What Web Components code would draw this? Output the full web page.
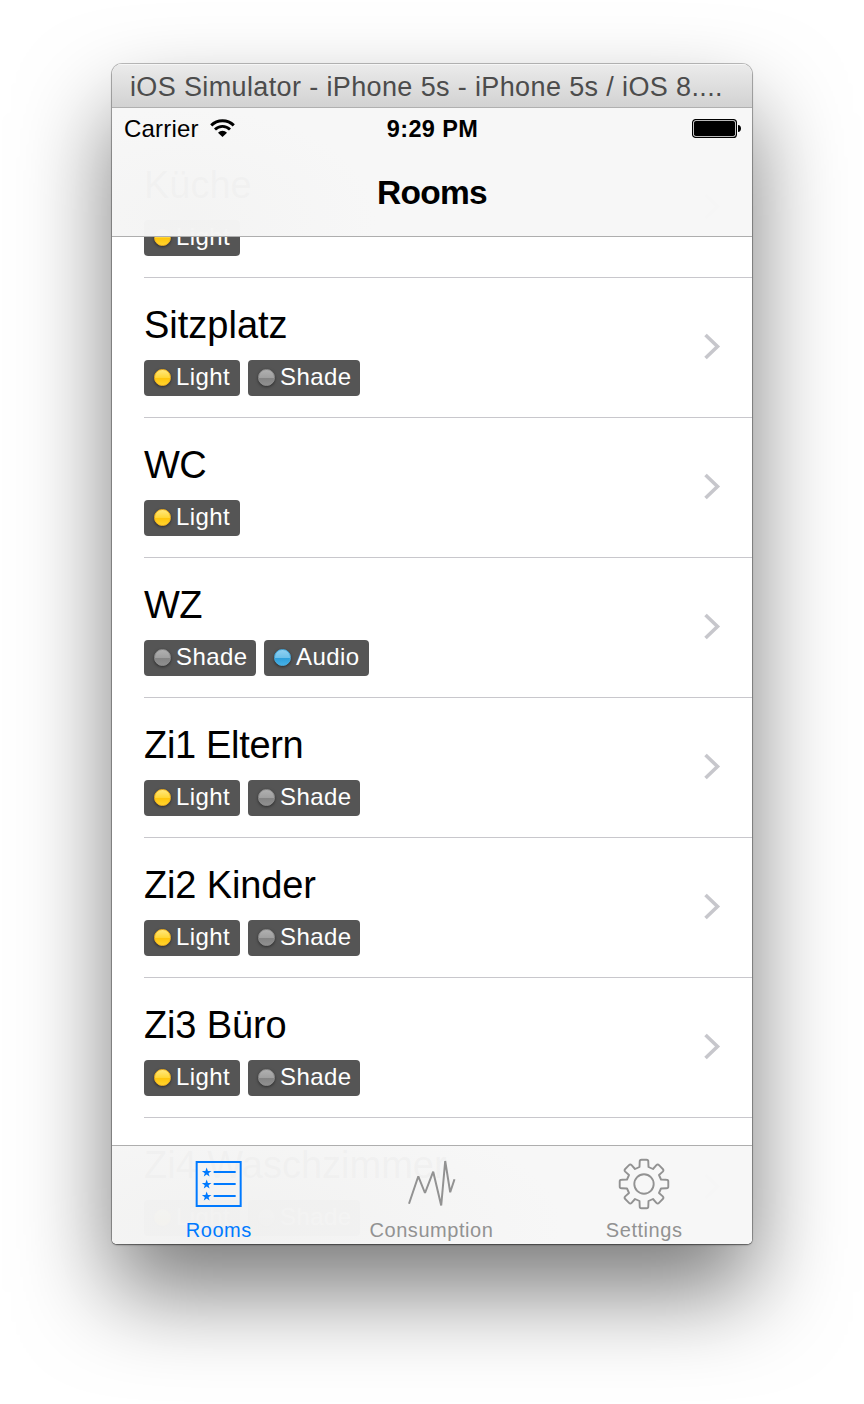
<!DOCTYPE html>
<html lang="en">
<head>
<meta charset="utf-8">
<title>iOS Simulator</title>
<style>
html, body { margin: 0; background: #fff; }
body { width: 864px; height: 1404px; overflow: hidden; font-family: "Liberation Sans", Arial, sans-serif; }
</style>
</head>
<body>
<sim-window heading="iOS Simulator - iPhone 5s - iPhone 5s / iOS 8....">
  <room-list>
    <room-row name="Küche" ls="0"><room-tag kind="light">Light</room-tag></room-row>
    <room-row name="Sitzplatz" ls="0"><room-tag kind="light">Light</room-tag><room-tag kind="shade">Shade</room-tag></room-row>
    <room-row name="WC" ls="-.5"><room-tag kind="light">Light</room-tag></room-row>
    <room-row name="WZ" ls="-.5"><room-tag kind="shade">Shade</room-tag><room-tag kind="audio">Audio</room-tag></room-row>
    <room-row name="Zi1 Eltern" ls="-.33"><room-tag kind="light">Light</room-tag><room-tag kind="shade">Shade</room-tag></room-row>
    <room-row name="Zi2 Kinder" ls="-.15"><room-tag kind="light">Light</room-tag><room-tag kind="shade">Shade</room-tag></room-row>
    <room-row name="Zi3 Büro" ls="-.15"><room-tag kind="light">Light</room-tag><room-tag kind="shade">Shade</room-tag></room-row>
    <room-row name="Zi4 Waschzimmer" ls="0"><room-tag kind="light">Light</room-tag><room-tag kind="shade">Shade</room-tag></room-row>
  </room-list>
  <nav-bar slot="top">Rooms</nav-bar>
  <tab-bar slot="bottom">
    <tab-item icon="rooms" active>Rooms</tab-item>
    <tab-item icon="chart">Consumption</tab-item>
    <tab-item icon="gear">Settings</tab-item>
  </tab-bar>
</sim-window>
<script>
class Base extends HTMLElement {
  connectedCallback() {
    if (!this.shadowRoot) this.attachShadow({ mode: "open" }).innerHTML = this.render();
  }
}

customElements.define("sim-window", class extends Base {
  render() {
    return `<style>
      :host { display: block; padding: 64px 112px 160px; }
      .win { width: 640px; height: 1180px; border-radius: 10px 10px 5px 5px;
        box-shadow: 0 0 0 1px rgba(0,0,0,.24), 0 1px 2px rgba(0,0,0,.4), 0 48px 92px rgba(0,0,0,.52); }
      .clip { height: 100%; border-radius: inherit; overflow: hidden; display: flex; flex-direction: column; background: #fff; }
      header { box-sizing: border-box; height: 44px; flex: none; padding-left: 18px; font-size: 27px; line-height: 46px;
        letter-spacing: .37px; white-space: nowrap; color: #4c4c4c; background: linear-gradient(#ebebeb, #d2d2d2);
        border-bottom: 1px solid #b0b0b0; box-shadow: inset 0 1px #f6f6f6; }
      .screen { flex: 1; min-height: 0; display: grid; grid-template: 1fr / 1fr; overflow: hidden; }
      .screen > div { grid-area: 1 / 1; min-height: 0; z-index: 1; }
      .list { overflow: hidden; z-index: 0 !important; }
      .top { align-self: start; } .bottom { align-self: end; }
    </style>
    <div class="win"><div class="clip"><header>${this.getAttribute("heading")}</header>
      <div class="screen"><div class="list"><slot></slot></div><div class="top"><slot name="top"></slot></div>
      <div class="bottom"><slot name="bottom"></slot></div></div></div></div>`;
  }
});

customElements.define("nav-bar", class extends Base {
  render() {
    return `<style>
      :host { box-sizing: border-box; display: flex; flex-direction: column; height: 129px; border-bottom: 1px solid #aeaeae;
        background: radial-gradient(ellipse 190px 110px at 75px 110px, rgba(240,240,239,.45), rgba(240,240,240,0)), rgba(247,247,247,.976); }
      .status { display: grid; grid-template-columns: 1fr auto 1fr; height: 40px; padding: 0 11px 0 12px; font-size: 24px; line-height: 42px; color: #000; }
      .l { display: flex; gap: 11px; } .l span { letter-spacing: .2px; }
      .l svg { margin-top: 11px; }
      .time { font-weight: 700; letter-spacing: .35px; font-size: 23.5px; }
      .r { display: flex; justify-content: flex-end; align-items: flex-start; padding-top: 11px; }
      h1 { margin: 0; text-align: center; font-size: 33.5px; line-height: 40px; padding-top: 25px; font-weight: 700; letter-spacing: -.7px; }
    </style>
    <div class="status">
      <div class="l"><span>Carrier</span>
        <svg width="25" height="19" viewBox="0 0 25 19" fill="none" stroke="#000"><path d="M1.200 6.400a16 16 0 0 1 22.600 0" stroke-width="2.900"/><path d="M5 10.400a10.600 10.600 0 0 1 15 0" stroke-width="2.800"/><path d="M12.500 18 8 13.700a6.400 6.400 0 0 1 9 0z" fill="#000" stroke="none"/></svg></div>
      <div class="time">9:29 PM</div>
      <div class="r"><svg width="49" height="19" viewBox="0 0 49 19"><rect x=".6" y=".6" width="43.800" height="17.800" rx="3" fill="none" stroke="#000" stroke-width="1.200"/><rect x="2" y="2" width="41" height="15" rx="1.800"/><path d="M46 6c2 .2 3 1.600 3 3.500s-1 3.300-3 3.500z"/></svg></div>
    </div>
    <h1><slot></slot></h1>`;
  }
});

customElements.define("room-list", class extends Base {
  render() { return `<style>:host { display: flex; flex-direction: column; padding-top: 30px; }</style><slot></slot>`; }
});

customElements.define("room-row", class extends Base {
  render() {
    return `<style>
      :host { box-sizing: border-box; flex: none; display: flex; align-items: center; justify-content: space-between; height: 140px;
        margin-left: 32px; padding-right: 31px; border-bottom: 1px solid #c8c7cc; }
      .text { align-self: flex-start; padding-top: 25px; }
      h2 { margin: 0; font-size: 38px; line-height: 44px; font-weight: 400; color: #000; white-space: nowrap; letter-spacing: ${this.getAttribute("ls")}px; }
      .tags { display: flex; gap: 8px; margin-top: 13px; }
      svg { margin-bottom: 1px; }
    </style>
    <div class="text"><h2>${this.getAttribute("name")}</h2><div class="tags"><slot></slot></div></div>
    <svg width="17" height="28" viewBox="0 0 17 28" fill="none" stroke="#c7c7cc" stroke-width="3.600"><path d="M1.500 2 13.500 13.500 1.500 25"/></svg>`;
  }
});

customElements.define("room-tag", class extends Base {
  render() {
    const [w, rim, a, b, c, d] = {
      light: [96, "#f5b41c", "#ffe87c", "#ffd738", "#ffc40a", "#ffd42e"],
      shade: [112, "#8d8d8d", "#b0b0b0", "#a0a0a0", "#838383", "#8f8f8f"],
      audio: [105, "#44abe0", "#8fd0f2", "#6fc1ea", "#2c9edb", "#45b0e5"]
    }[this.getAttribute("kind")];
    return `<style>
      :host { box-sizing: border-box; display: flex; align-items: center; width: ${w}px; height: 36px; padding-left: 10px; border-radius: 4px; background: #555; }
      i { box-sizing: border-box; flex: none; width: 17px; height: 17px; margin-bottom: 1px; border-radius: 50%; border: 1px solid ${rim};
        background: linear-gradient(${a}, ${b} 50%, ${c} 52%, ${d}); box-shadow: 0 1px 3px rgba(0,0,0,.5); }
      span { margin-left: 5px; margin-top: -2px; font-size: 24px; line-height: 34px; color: #fff; letter-spacing: .4px; white-space: nowrap; }
    </style><i></i><span><slot></slot></span>`;
  }
});

customElements.define("tab-bar", class extends Base {
  render() {
    return `<style>:host { box-sizing: border-box; display: grid; grid-template-columns: repeat(3, 1fr); height: 99px; padding-right: 2px;
      border-top: 1px solid #aeaeae;
      background: radial-gradient(ellipse 330px 130px at 120px 80px, rgba(238,238,237,.6), rgba(240,240,240,0)), rgba(247,247,247,.978); }</style><slot></slot>`;
  }
});

const gearPath = () => {
  const turn = ([x, y], n) => { for (; n > 0; n--) [x, y] = [-y, x]; return `${x} ${y}`; };
  let d = "M-4.500-17";
  for (let n = 0; n < 4; n++) {
    const p = (x, y) => turn([x, y], n);
    d += `L${p(-4.5, -17)}L${p(-4.3, -22.5)}Q${p(-4.3, -24.3)} ${p(-2.5, -24.3)}L${p(2.5, -24.3)}Q${p(4.3, -24.3)} ${p(4.3, -22.5)}L${p(4.5, -17)}L${p(9, -15)}L${p(12.4, -18.8)}Q${p(13.7, -20.1)} ${p(15, -18.8)}L${p(18.8, -15)}Q${p(20.1, -13.7)} ${p(18.8, -12.4)}L${p(15, -9)}`;
  }
  return d + "Z";
};
const star = y => `<path transform="translate(11 ${y})" fill="currentColor" stroke="none" d="M0-5 1.250-1.600 4.800-1.500 1.900.7 2.900 4.100 0 2.100-2.900 4.100-1.900.7-4.800-1.500-1.250-1.600Z"/>`;
const icons = {
  rooms: () => `<g transform="translate(2.670 2)" stroke-width="2"><rect x="1" y="1" width="44" height="44"/><path d="M18 11h22M18 23h22M18 35h22"/>${star(11.5)}${star(23.5)}${star(35.5)}</g>`,
  chart: () => `<path stroke-width="2" stroke-linejoin="bevel" d="M3 44.700 12.300 17.300 19 34 27.200 12.700 35.200 46.500 39.200 2 44.200 33.300 48.500 20.300"/>`,
  gear: () => `<g transform="translate(25 25)" stroke-width="1.900"><path stroke-linejoin="round" d="${gearPath()}"/><circle r="9.700"/></g>`
};
customElements.define("tab-item", class extends Base {
  render() {
    return `<style>
      :host { display: flex; flex-direction: column; align-items: center; padding-top: 13px; color: ${this.hasAttribute("active") ? "#007aff" : "#929292"}; }
      svg { display: block; overflow: visible; }
      span { margin-top: 9px; padding-left: 1px; font-size: 20px; line-height: 24px; letter-spacing: .55px; }
    </style>
    <svg width="50" height="50" viewBox="0 0 50 50" fill="none" stroke="currentColor">${icons[this.getAttribute("icon")]()}</svg>
    <span><slot></slot></span>`;
  }
});
</script>
</body>
</html>
